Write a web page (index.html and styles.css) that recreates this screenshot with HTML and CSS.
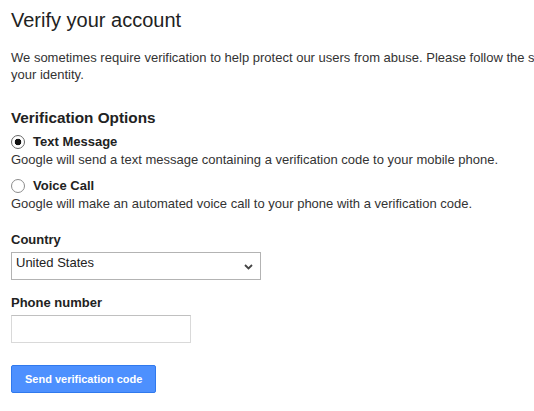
FILE: index.html
```html
<!DOCTYPE html>
<html lang="en">
<head>
  <meta charset="UTF-8">
  <title>Verify your account</title>
  <link rel="stylesheet" href="styles.css">
</head>
<body>
  <div class="page">
    <h1 class="title">Verify your account</h1>
    <p class="intro">We sometimes require verification to help protect our users from abuse. Please follow the steps below to verify your identity.</p>

    <!-- Options -->
    <h2 class="section-title">Verification Options</h2>
    <div class="options">
      <label class="option">
        <span class="option-head">
          <input type="radio" name="method" class="radio" checked>
          <span>Text Message</span>
        </span>
        <span class="option-desc">Google will send a text message containing a verification code to your mobile phone.</span>
      </label>
      <label class="option">
        <span class="option-head">
          <input type="radio" name="method" class="radio">
          <span>Voice Call</span>
        </span>
        <span class="option-desc">Google will make an automated voice call to your phone with a verification code.</span>
      </label>
    </div>

    <!-- Form fields -->
    <div class="field">
      <div class="field-label">Country</div>
      <div class="select">
        <span>United States</span>
        <svg class="chevron" width="9" height="6" viewBox="0 0 9 6">
          <path d="M1 1 L4.5 4.5 L8 1" fill="none" stroke="#444" stroke-width="1.8"/>
        </svg>
      </div>
    </div>

    <div class="field field-phone">
      <label class="field-label" for="phone">Phone number</label>
      <input type="text" id="phone" class="text-input">
    </div>

    <button class="primary-btn">Send verification code</button>
  </div>
</body>
</html>
```

FILE: styles.css
```css
html, body {
  overflow-x: hidden;
}
body {
  margin: 0;
  font-family: Arial, "Liberation Sans", sans-serif;
  font-size: 13px;
  color: #222;
  background: #fff;
}
.page {
  width: 650px;
  padding: 8px 0 0 11px;
}
.title {
  margin: 0;
  font-size: 20px;
  font-weight: normal;
  line-height: 24px;
}
.intro {
  margin: 17px 0 0;
  line-height: 17px;
  color: #333;
}
.section-title {
  margin: 26px 0 0;
  font-size: 15.3px;
  line-height: 18px;
  font-weight: bold;
}
.options {
  margin-top: 6px;
}
.option {
  display: block;
  cursor: pointer;
}
.option + .option {
  margin-top: 9px;
}
.option-head {
  display: flex;
  align-items: flex-start;
  line-height: 18px;
  font-weight: bold;
}
.radio {
  appearance: none;
  -webkit-appearance: none;
  width: 14px;
  height: 14px;
  margin: 2px 8px 0 0;
  border: 1px solid #8c8c8c;
  border-radius: 50%;
  background: #fff;
  box-sizing: border-box;
}
.radio:checked {
  border-color: #666;
  background: radial-gradient(circle, #111 0, #111 3px, #fff 3.6px);
}
.option-desc {
  display: block;
  line-height: 17px;
  color: #333;
}
.field {
  margin-top: 19px;
}
.field-phone {
  margin-top: 14px;
}
.field-label {
  display: block;
  margin-bottom: 3px;
  font-weight: bold;
  line-height: 18px;
}
.select {
  display: flex;
  justify-content: space-between;
  align-items: flex-start;
  width: 250px;
  height: 28px;
  box-sizing: border-box;
  padding: 1px 7px 0 4px;
  border: 1px solid #b3b3b3;
  line-height: 17px;
  color: #222;
}
.chevron {
  margin-top: 10px;
}
.text-input {
  display: block;
  width: 180px;
  height: 28px;
  box-sizing: border-box;
  margin: 0;
  padding: 0 8px;
  border: 1px solid #d9d9d9;
  border-top-color: #c0c0c0;
  font-family: inherit;
  font-size: 13px;
}
.primary-btn {
  display: block;
  margin-top: 22px;
  height: 28px;
  padding: 0 13px;
  background-color: #4d90fe;
  border: 1px solid #3079ed;
  border-radius: 2px;
  color: #fff;
  font-family: Arial, "Liberation Sans", sans-serif;
  font-size: 11px;
  font-weight: bold;
  cursor: pointer;
}
```
